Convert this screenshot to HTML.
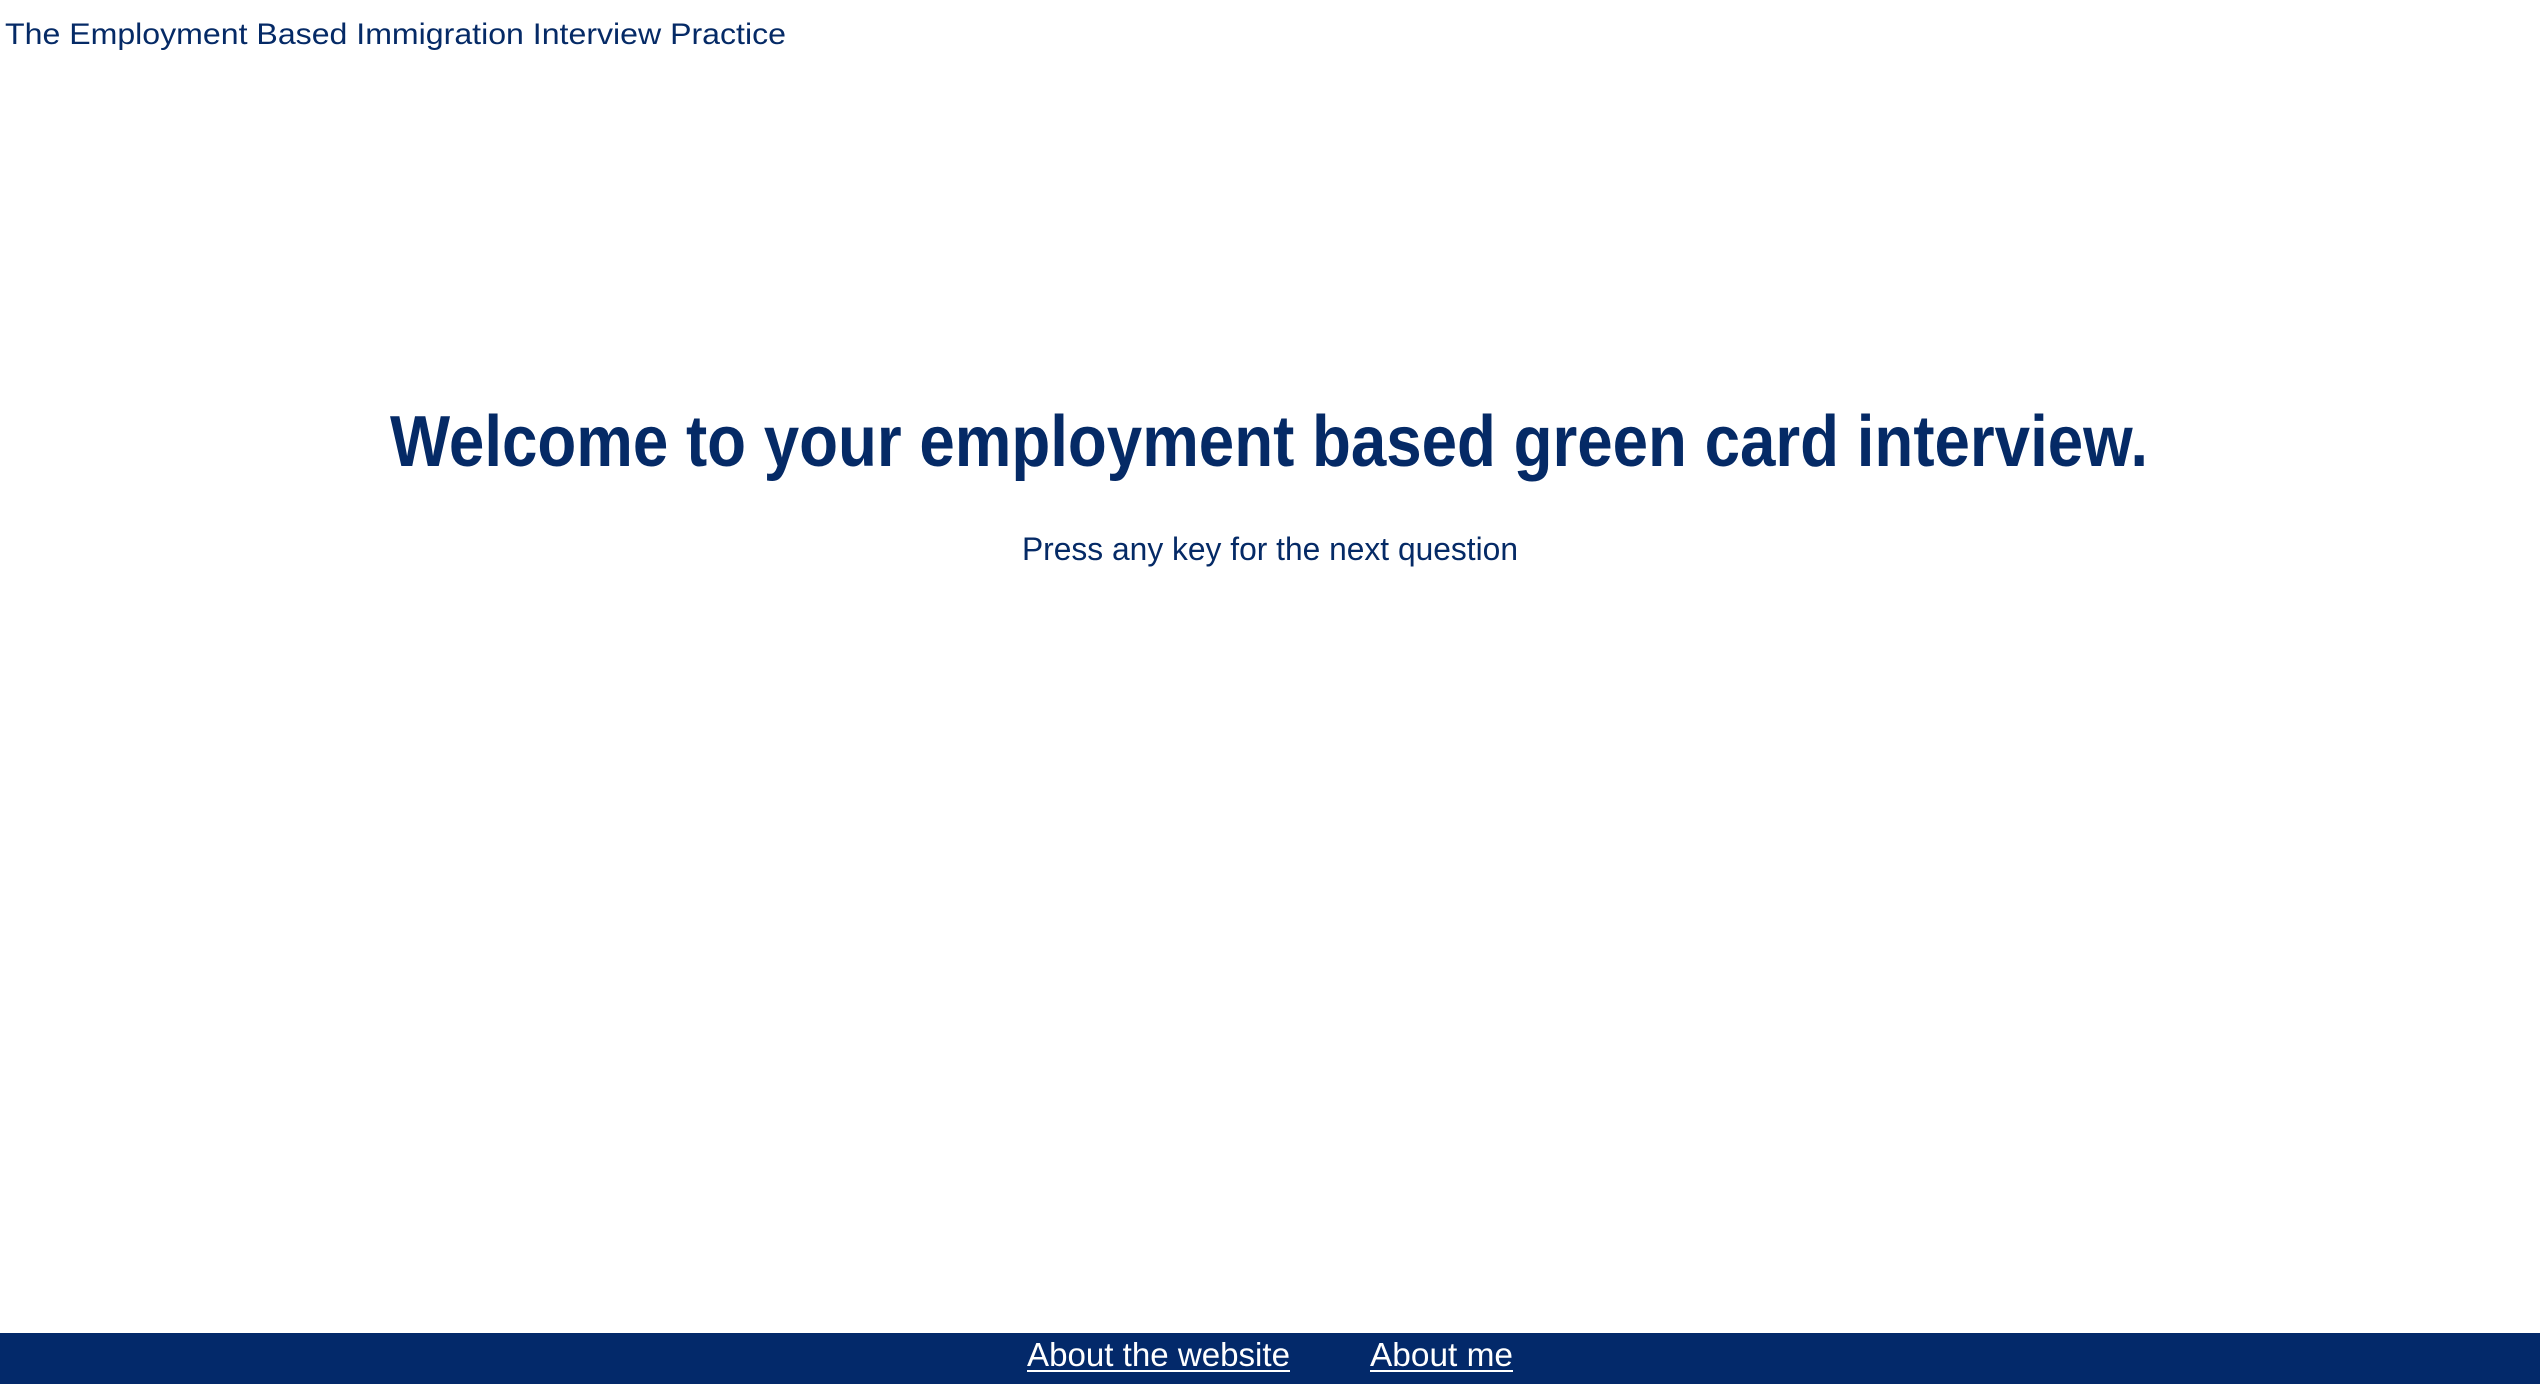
<!DOCTYPE html>
<html><head><meta charset="utf-8"><style>
html,body{margin:0;padding:0;background:#fff;width:2540px;height:1384px;overflow:hidden}
svg{display:block}
</style></head><body>
<svg width="2540" height="1384" viewBox="0 0 2540 1384" xmlns="http://www.w3.org/2000/svg" font-family="Liberation Sans, sans-serif">
<text x="5" y="44" font-size="30" fill="#052a66" textLength="781" lengthAdjust="spacingAndGlyphs">The Employment Based Immigration Interview Practice</text>
<text x="390" y="466" font-size="72" font-weight="bold" fill="#052a66" textLength="1758" lengthAdjust="spacingAndGlyphs">Welcome to your employment based green card interview.</text>
<text x="1022" y="560" font-size="32" fill="#052a66" textLength="496" lengthAdjust="spacingAndGlyphs">Press any key for the next question</text>
<rect x="0" y="1333" width="2540" height="51" fill="#03296a"/>
<text x="1027" y="1366" font-size="33" fill="#fff" textLength="263" lengthAdjust="spacingAndGlyphs">About the website</text>
<rect x="1027" y="1370" width="263" height="2" fill="#fff"/>
<text x="1370" y="1366" font-size="33" fill="#fff" textLength="143" lengthAdjust="spacingAndGlyphs">About me</text>
<rect x="1370" y="1370" width="143" height="2" fill="#fff"/>
</svg>
</body></html>
